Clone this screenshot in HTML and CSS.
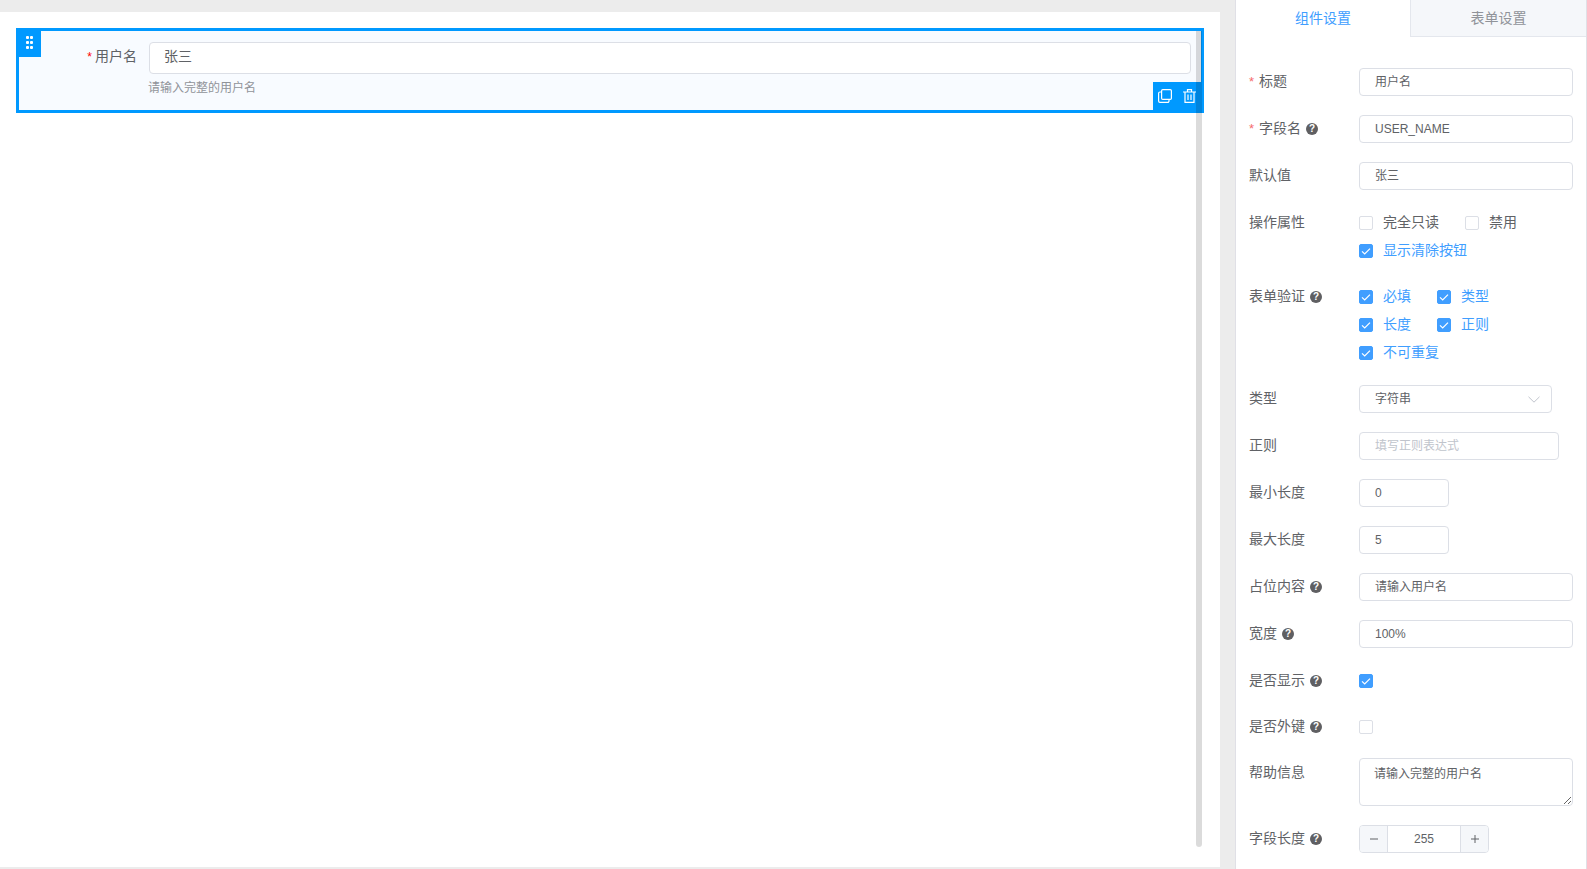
FILE: index.html
```html
<!DOCTYPE html>
<html lang="zh-CN">
<head>
<meta charset="utf-8">
<title>表单设计</title>
<link rel="stylesheet" href="styles.css">
</head>
<body>
<div class="app">
  <main class="main">
    <div class="canvas">
      <div class="item">
        <div class="handle">
          <svg width="7" height="13" viewBox="0 0 7 13"><g fill="#fff"><rect x="0" y="0" width="3" height="3" rx="1"/><rect x="4" y="0" width="3" height="3" rx="1"/><rect x="0" y="5" width="3" height="3" rx="1"/><rect x="4" y="5" width="3" height="3" rx="1"/><rect x="0" y="10" width="3" height="3" rx="1"/><rect x="4" y="10" width="3" height="3" rx="1"/></g></svg>
        </div>
        <div class="item-row">
          <label class="item-label"><span class="item-star">*</span>用户名</label>
          <input class="item-input" type="text" value="张三">
        </div>
        <div class="item-help">请输入完整的用户名</div>
        <div class="actions">
          <svg width="14" height="14" viewBox="0 0 14 14" fill="none" stroke="#fff" stroke-width="1.2"><rect x="3.6" y="0.6" width="9.8" height="9.8" rx="1.2"/><path d="M3.6 3H2a1.4 1.4 0 0 0-1.4 1.4V12A1.4 1.4 0 0 0 2 13.4h7.6A1.4 1.4 0 0 0 11 12v-1.6"/></svg>
          <svg width="13" height="14" viewBox="0 0 13 14" fill="none" stroke="#fff" stroke-width="1.2"><path d="M0 3h13M4.5 3V.6h4V3M2 3v10.4h9V3M5 5.5v5.5M8 5.5v5.5"/></svg>
        </div>
      </div>
      <div class="scrollbar"></div>
    </div>
  </main>
  <aside class="panel">
    <div class="tabs">
      <div class="tab tab-active">组件设置</div>
      <div class="tab tab-idle">表单设置</div>
    </div>
    <form class="form">
      <div class="row">
        <div class="label"><span class="star">*</span>标题</div>
        <input class="input input-cjk" type="text" value="用户名">
      </div>
      <div class="row">
        <div class="label"><span class="star">*</span>字段名<span class="tip">?</span></div>
        <input class="input" type="text" value="USER_NAME">
      </div>
      <div class="row">
        <div class="label">默认值</div>
        <input class="input input-cjk" type="text" value="张三">
      </div>
      <div class="row">
        <div class="label">操作属性</div>
        <div class="checks">
          <div class="check-line">
            <span class="check"><span class="box"></span><span class="check-text">完全只读</span></span>
            <span class="check"><span class="box"></span><span class="check-text">禁用</span></span>
          </div>
          <div class="check-line">
            <span class="check on"><span class="box"><svg width="14" height="14" viewBox="0 0 14 14"><path d="M3 7.4l2.7 2.6L11 4.6" fill="none" stroke="#fff" stroke-width="1.2"/></svg></span><span class="check-text">显示清除按钮</span></span>
          </div>
        </div>
      </div>
      <div class="row">
        <div class="label label-tight">表单验证<span class="tip">?</span></div>
        <div class="checks">
          <div class="check-line">
            <span class="check on"><span class="box"><svg width="14" height="14" viewBox="0 0 14 14"><path d="M3 7.4l2.7 2.6L11 4.6" fill="none" stroke="#fff" stroke-width="1.2"/></svg></span><span class="check-text">必填</span></span>
            <span class="check on"><span class="box"><svg width="14" height="14" viewBox="0 0 14 14"><path d="M3 7.4l2.7 2.6L11 4.6" fill="none" stroke="#fff" stroke-width="1.2"/></svg></span><span class="check-text">类型</span></span>
          </div>
          <div class="check-line">
            <span class="check on"><span class="box"><svg width="14" height="14" viewBox="0 0 14 14"><path d="M3 7.4l2.7 2.6L11 4.6" fill="none" stroke="#fff" stroke-width="1.2"/></svg></span><span class="check-text">长度</span></span>
            <span class="check on"><span class="box"><svg width="14" height="14" viewBox="0 0 14 14"><path d="M3 7.4l2.7 2.6L11 4.6" fill="none" stroke="#fff" stroke-width="1.2"/></svg></span><span class="check-text">正则</span></span>
          </div>
          <div class="check-line">
            <span class="check on"><span class="box"><svg width="14" height="14" viewBox="0 0 14 14"><path d="M3 7.4l2.7 2.6L11 4.6" fill="none" stroke="#fff" stroke-width="1.2"/></svg></span><span class="check-text">不可重复</span></span>
          </div>
        </div>
      </div>
      <div class="row">
        <div class="label">类型</div>
        <div class="select">
          <span>字符串</span>
          <svg width="12" height="7" viewBox="0 0 12 7"><path d="M.5.8L6 6.2 11.5.8" fill="none" stroke="#c0c4cc" stroke-width="1"/></svg>
        </div>
      </div>
      <div class="row">
        <div class="label">正则</div>
        <input class="input input-regex" type="text" placeholder="填写正则表达式">
      </div>
      <div class="row">
        <div class="label">最小长度</div>
        <input class="input input-short" type="text" value="0">
      </div>
      <div class="row">
        <div class="label">最大长度</div>
        <input class="input input-short" type="text" value="5">
      </div>
      <div class="row">
        <div class="label label-tight">占位内容<span class="tip">?</span></div>
        <input class="input input-cjk" type="text" value="请输入用户名">
      </div>
      <div class="row">
        <div class="label label-tight">宽度<span class="tip">?</span></div>
        <input class="input" type="text" value="100%">
      </div>
      <div class="row row-check">
        <div class="label label-tight">是否显示<span class="tip">?</span></div>
        <div class="check-line"><span class="check on"><span class="box"><svg width="14" height="14" viewBox="0 0 14 14"><path d="M3 7.4l2.7 2.6L11 4.6" fill="none" stroke="#fff" stroke-width="1.2"/></svg></span></span></div>
      </div>
      <div class="row row-check row-before-area">
        <div class="label label-tight">是否外键<span class="tip">?</span></div>
        <div class="check-line"><span class="check"><span class="box"></span></span></div>
      </div>
      <div class="row row-area">
        <div class="label">帮助信息</div>
        <textarea class="area">请输入完整的用户名</textarea>
      </div>
      <div class="row">
        <div class="label label-tight">字段长度<span class="tip">?</span></div>
        <div class="counter">
          <span class="step step-minus">
            <svg width="10" height="10" viewBox="0 0 10 10"><path d="M1 5h8" stroke="#606266" stroke-width="1"/></svg>
          </span>
          <span class="count">255</span>
          <span class="step step-plus">
            <svg width="10" height="10" viewBox="0 0 10 10"><path d="M1 5h8M5 1v8" stroke="#606266" stroke-width="1"/></svg>
          </span>
        </div>
      </div>
    </form>
  </aside>
</div>
</body>
</html>
```

FILE: styles.css
```css
* { box-sizing: border-box; }

html, body {
  margin: 0;
  height: 869px;
  overflow: hidden;
}

body {
  background: #ececec;
  font-family: "Liberation Sans", "Noto Sans CJK SC", sans-serif;
  font-size: 14px;
  color: #606266;
}

.app {
  display: flex;
  height: 869px;
}

.main {
  width: 1235px;
  flex: none;
  padding: 12px 15px 2px 0;
}

.canvas {
  position: relative;
  height: 855px;
  background: #fff;
  padding: 16px 0 0 16px;
}

.item {
  position: relative;
  width: 1188px;
  height: 85px;
  border: 3px solid #0099ff;
  background: #f8fbff;
  padding: 11px 10px 0 0;
}

.handle {
  position: absolute;
  left: -3px;
  top: -3px;
  width: 25px;
  height: 29px;
  background: #0099ff;
  display: flex;
  align-items: center;
  justify-content: center;
  padding: 0 0 1px 1px;
}

.item-row {
  display: flex;
  align-items: flex-start;
}

.item-label {
  width: 130px;
  flex: none;
  padding-right: 12px;
  text-align: right;
  line-height: 29px;
  color: #606266;
}

.item-star {
  color: #f00;
  font-size: 12px;
  margin-right: 3px;
}

.item-input {
  flex: 1;
  min-width: 0;
  height: 32px;
  border: 1px solid #dcdfe6;
  border-radius: 4px;
  background: #fff;
  padding: 0 15px 6px 14px;
  font: inherit;
  font-size: 14px;
  color: #606266;
  outline: none;
}

.item-help {
  margin: 5px 0 0 129px;
  font-size: 12px;
  line-height: 18px;
  color: #909399;
}

.actions {
  position: absolute;
  right: -3px;
  bottom: -3px;
  width: 51px;
  height: 31px;
  background: #0099ff;
  display: flex;
  align-items: center;
  gap: 11px;
  padding: 0 0 3px 5px;
}

.scrollbar {
  position: absolute;
  left: 1196px;
  top: 19px;
  width: 6px;
  height: 816px;
  border-radius: 0 0 3px 3px;
  background: rgba(0, 0, 0, .14);
}

.panel {
  width: 352px;
  flex: none;
  height: 869px;
  background: #fff;
  border-left: 1px solid #e0e0e6;
  border-right: 1px solid #e0e0e6;
  overflow: hidden;
}

.tabs {
  display: flex;
  height: 37px;
}

.tab {
  line-height: 36px;
  text-align: center;
  font-size: 14px;
}

.tab-active {
  width: 174px;
  color: #409eff;
}

.tab-idle {
  flex: 1;
  color: #909399;
  background: #f5f7fa;
  border-left: 1px solid #e4e7ed;
  border-bottom: 1px solid #e4e7ed;
}

.form {
  padding: 31px 13px 0;
}

.row {
  display: flex;
  align-items: flex-start;
  min-height: 29px;
  margin-bottom: 18px;
}

.row-check {
  min-height: 28px;
}

.row-before-area {
  margin-bottom: 17px;
}

.row-area {
  min-height: 49px;
}

.label {
  width: 110px;
  flex: none;
  line-height: 26px;
  font-size: 14px;
  color: #606266;
  white-space: nowrap;
}

.row-area .label {
  line-height: 28px;
}

.star {
  color: #f56c6c;
  margin-right: 5px;
  font-size: 13px;
}

.tip {
  display: inline-block;
  width: 12px;
  height: 12px;
  margin-left: 5px;
  border-radius: 50%;
  background: #5f5f62;
  color: #fff;
  font-size: 10px;
  font-weight: 700;
  line-height: 12px;
  text-align: center;
  vertical-align: 1px;
}

.input {
  display: block;
  width: 214px;
  height: 28px;
  border: 1px solid #dcdfe6;
  border-radius: 4px;
  background: #fff;
  padding: 0 15px;
  font: inherit;
  font-size: 12px;
  color: #606266;
  outline: none;
}

.input-cjk {
  padding-bottom: 3px;
}

.input::placeholder {
  color: #c0c4cc;
  opacity: 1;
}

.input-regex {
  width: 200px;
}

.input-short {
  width: 90px;
}

.checks {
  display: flex;
  flex-direction: column;
}

.check-line {
  display: flex;
  gap: 26px;
  height: 28px;
  align-items: center;
}

.check {
  display: inline-flex;
  align-items: center;
  gap: 10px;
  font-size: 14px;
  color: #606266;
}

.check-text {
  margin-bottom: 4px;
}

.box {
  display: block;
  width: 14px;
  height: 14px;
  border: 1px solid #dcdfe6;
  border-radius: 2px;
  background: #fff;
}

.box svg {
  display: block;
  margin: -1px;
}

.on {
  color: #409eff;
}

.on .box {
  background: #409eff;
  border-color: #409eff;
}

.select {
  width: 193px;
  height: 28px;
  border: 1px solid #dcdfe6;
  border-radius: 4px;
  background: #fff;
  display: flex;
  align-items: center;
  justify-content: space-between;
  padding: 0 11px 0 15px;
  font-size: 12px;
  color: #606266;
}

.select span {
  margin-bottom: 3px;
}

.area {
  display: block;
  width: 214px;
  height: 48px;
  border: 1px solid #dcdfe6;
  border-radius: 4px;
  background: #fff;
  padding: 6px 15px 4px 14px;
  font: inherit;
  font-size: 12px;
  line-height: 18px;
  color: #606266;
  outline: none;
}

.counter {
  display: flex;
  width: 130px;
  height: 28px;
  border: 1px solid #dcdfe6;
  border-radius: 4px;
  overflow: hidden;
  background: #fff;
}

.step {
  width: 28px;
  flex: none;
  background: #f5f7fa;
  display: flex;
  align-items: center;
  justify-content: center;
}

.step-minus {
  border-right: 1px solid #dcdfe6;
}

.step-plus {
  border-left: 1px solid #dcdfe6;
}

.count {
  flex: 1;
  text-align: center;
  font-size: 12px;
  line-height: 26px;
  color: #606266;
}
```
